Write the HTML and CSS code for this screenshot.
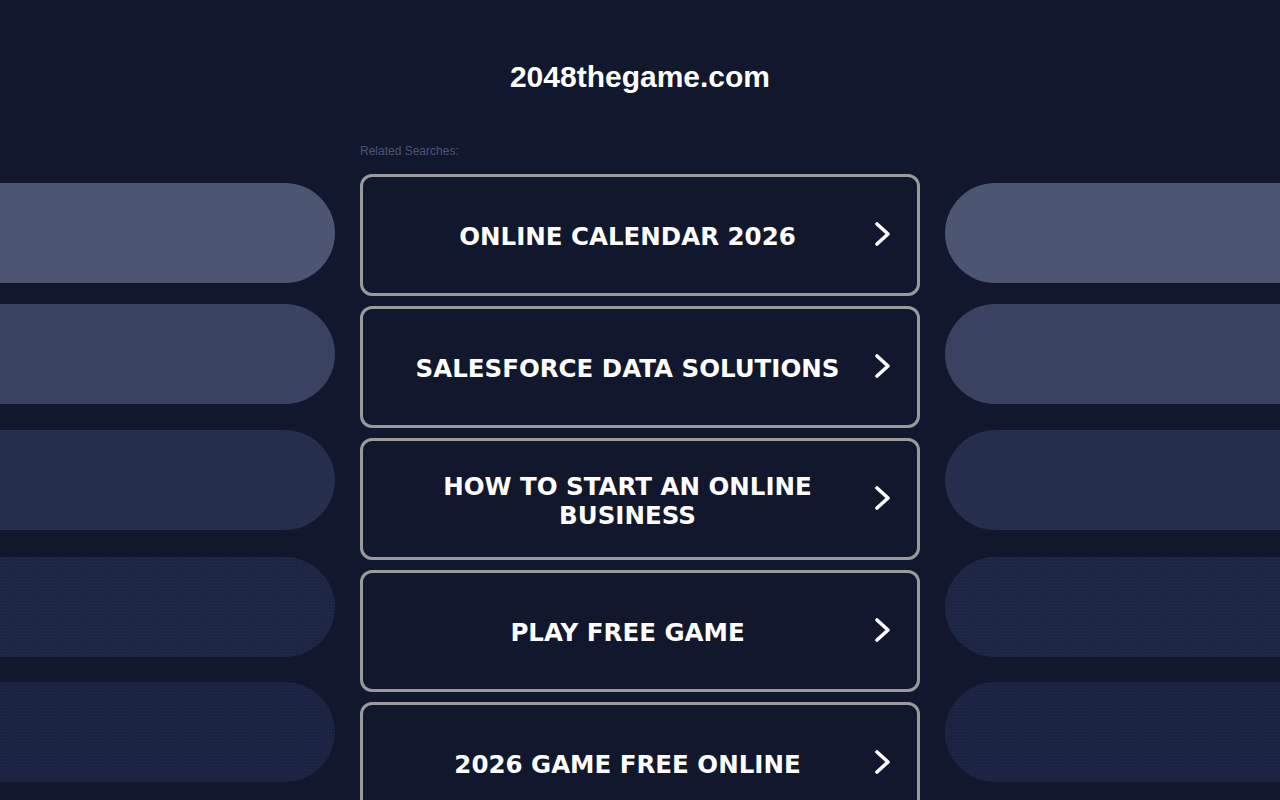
FILE: index.html
```html
<!DOCTYPE html>
<html lang="en">
<head>
  <meta charset="UTF-8">
  <meta name="viewport" content="width=device-width, initial-scale=1.0">
  <title>2048thegame.com</title>
  <link rel="stylesheet" href="styles.css">
</head>
<body>
  <div class="page">
    <div class="side side-left">
      <div class="pill pill-1"></div>
      <div class="pill pill-2"></div>
      <div class="pill pill-3"></div>
      <div class="pill pill-4"></div>
      <div class="pill pill-5"></div>
    </div>

    <div class="main">
      <h1 class="domain">2048thegame.com</h1>
      <div class="related">Related Searches:</div>
      <div class="links">
        <a class="link" href="#">
          <span class="link-text">ONLINE CALENDAR 2026</span>
          <svg class="arrow" width="18" height="26" viewBox="0 0 18 26"><path d="M3 3 L14 13 L3 23" fill="none" stroke="#fff" stroke-width="3.6" stroke-linecap="round" stroke-linejoin="round"/></svg>
        </a>
        <a class="link" href="#">
          <span class="link-text">SALESFORCE DATA SOLUTIONS</span>
          <svg class="arrow" width="18" height="26" viewBox="0 0 18 26"><path d="M3 3 L14 13 L3 23" fill="none" stroke="#fff" stroke-width="3.6" stroke-linecap="round" stroke-linejoin="round"/></svg>
        </a>
        <a class="link" href="#">
          <span class="link-text">HOW TO START AN ONLINE BUSINESS</span>
          <svg class="arrow" width="18" height="26" viewBox="0 0 18 26"><path d="M3 3 L14 13 L3 23" fill="none" stroke="#fff" stroke-width="3.6" stroke-linecap="round" stroke-linejoin="round"/></svg>
        </a>
        <a class="link" href="#">
          <span class="link-text">PLAY FREE GAME</span>
          <svg class="arrow" width="18" height="26" viewBox="0 0 18 26"><path d="M3 3 L14 13 L3 23" fill="none" stroke="#fff" stroke-width="3.6" stroke-linecap="round" stroke-linejoin="round"/></svg>
        </a>
        <a class="link" href="#">
          <span class="link-text">2026 GAME FREE ONLINE</span>
          <svg class="arrow" width="18" height="26" viewBox="0 0 18 26"><path d="M3 3 L14 13 L3 23" fill="none" stroke="#fff" stroke-width="3.6" stroke-linecap="round" stroke-linejoin="round"/></svg>
        </a>
      </div>
    </div>

    <div class="side side-right">
      <div class="pill pill-1"></div>
      <div class="pill pill-2"></div>
      <div class="pill pill-3"></div>
      <div class="pill pill-4"></div>
      <div class="pill pill-5"></div>
    </div>
  </div>
</body>
</html>
```

FILE: styles.css
```css
body {
  margin: 0;
  background-color: #11172d;
  font-family: "Liberation Sans", Arial, sans-serif;
  color: #fff;
  overflow: hidden;
}

.page {
  display: flex;
  gap: 25px;
  height: 800px;
}

.side {
  flex: 1;
  display: flex;
  flex-direction: column;
  padding-top: 183px;
}

.pill {
  height: 100px;
  flex-shrink: 0;
}

.side-left .pill {
  border-radius: 0 50px 50px 0;
}

.side-right .pill {
  border-radius: 50px 0 0 50px;
}

.pill-1 {
  background-color: #4c5673;
}

.pill-2 {
  background-color: #394261;
  margin-top: 21px;
}

.pill-3 {
  background-color: #252e4c;
  margin-top: 26px;
}

.pill-4 {
  background-color: #1c2544;
  background-image: radial-gradient(rgba(255, 255, 255, 0.035) 0.6px, transparent 0.8px);
  background-size: 3px 3px;
  margin-top: 27px;
}

.pill-5 {
  background-color: #1b2342;
  background-image: radial-gradient(rgba(255, 255, 255, 0.035) 0.6px, transparent 0.8px);
  background-size: 3px 3px;
  margin-top: 25px;
}

.main {
  width: 560px;
  flex-shrink: 0;
}

.domain {
  margin: 59px 0 0;
  font-size: 30px;
  line-height: 36px;
  font-weight: bold;
  text-align: center;
}

.related {
  margin-top: 49px;
  font-size: 12px;
  line-height: 14px;
  color: #4b5574;
}

.links {
  margin-top: 16px;
  display: flex;
  flex-direction: column;
  gap: 10px;
}

.link {
  box-sizing: border-box;
  height: 122px;
  border: 3px solid #9a9a9a;
  border-radius: 12px;
  display: flex;
  align-items: center;
  padding: 3px 25px 0 30px;
  text-decoration: none;
  color: #fff;
}

.link-text {
  flex: 1;
  text-align: center;
  font-family: "DejaVu Sans", Verdana, sans-serif;
  font-weight: bold;
  font-size: 24.5px;
  line-height: 29px;
  padding-right: 12px;
}

.arrow {
  flex-shrink: 0;
  margin-top: -5px;
}
```
